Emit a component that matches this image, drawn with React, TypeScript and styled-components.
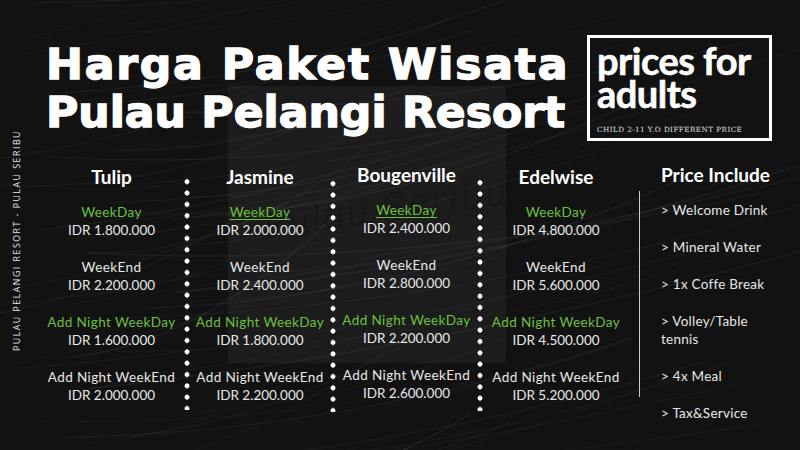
import React from 'react'
import styled, { createGlobalStyle } from 'styled-components'

const GlobalStyle = createGlobalStyle`
  html, body {
    margin: 0;
    padding: 0;
    background: #111;
  }
  * { box-sizing: border-box; }
`

const GREEN = '#6cc040'

type Tier = { label: string; price: string; green?: boolean; underline?: boolean }
type Package = { name: string; shift?: number; dotShift?: number; tiers: Tier[] }

const packages: Package[] = [
  {
    name: 'Tulip',
    dotShift: 0,
    tiers: [
      { label: 'WeekDay', price: 'IDR 1.800.000', green: true },
      { label: 'WeekEnd', price: 'IDR 2.200.000' },
      { label: 'Add Night WeekDay', price: 'IDR 1.600.000', green: true },
      { label: 'Add Night WeekEnd', price: 'IDR 2.000.000' },
    ],
  },
  {
    name: 'Jasmine',
    dotShift: 2,
    tiers: [
      { label: 'WeekDay', price: 'IDR 2.000.000', green: true, underline: true },
      { label: 'WeekEnd', price: 'IDR 2.400.000' },
      { label: 'Add Night WeekDay', price: 'IDR 1.800.000', green: true },
      { label: 'Add Night WeekEnd', price: 'IDR 2.200.000' },
    ],
  },
  {
    name: 'Bougenville',
    shift: -2,
    dotShift: 1,
    tiers: [
      { label: 'WeekDay', price: 'IDR 2.400.000', green: true, underline: true },
      { label: 'WeekEnd', price: 'IDR 2.800.000' },
      { label: 'Add Night WeekDay', price: 'IDR 2.200.000', green: true },
      { label: 'Add Night WeekEnd', price: 'IDR 2.600.000' },
    ],
  },
  {
    name: 'Edelwise',
    tiers: [
      { label: 'WeekDay', price: 'IDR 4.800.000', green: true },
      { label: 'WeekEnd', price: 'IDR 5.600.000' },
      { label: 'Add Night WeekDay', price: 'IDR 4.500.000', green: true },
      { label: 'Add Night WeekEnd', price: 'IDR 5.200.000' },
    ],
  },
]

const includes = ['Welcome Drink', 'Mineral Water', '1x Coffe Break', 'Volley/Table tennis', '4x Meal', 'Tax&Service']

const Page = styled.div`
  position: relative;
  width: 800px;
  height: 450px;
  overflow: hidden;
  background: #121212;
  display: flex;
  font-family: 'Lato', 'Noto Sans', sans-serif;
  color: #fff;
`

const Texture = styled.svg`
  position: absolute;
  inset: 0;
  pointer-events: none;
`

const Panel = styled.div`
  position: absolute;
  left: 228px;
  top: 86px;
  width: 278px;
  height: 277px;
  background: rgba(255, 255, 255, 0.045);
  display: flex;
  align-items: center;
  justify-content: center;
  pointer-events: none;
`

const Watermark = styled.span`
  font-family: 'DejaVu Serif', serif;
  font-style: italic;
  font-size: 38px;
  color: rgba(0, 0, 0, 0.16);
  transform: rotate(-8deg) translate(20px, -14px);
  white-space: nowrap;
`

const SideRail = styled.div`
  position: relative;
  width: 34px;
  flex: none;
  display: flex;
  align-items: flex-start;
  justify-content: center;
  padding-top: 130px;
`

const SideLabel = styled.div`
  writing-mode: vertical-rl;
  transform: rotate(180deg);
  font-family: 'Open Sans', sans-serif;
  font-size: 8.8px;
  letter-spacing: 1.5px;
  color: #ececec;
  white-space: nowrap;
`

const Main = styled.div`
  position: relative;
  flex: 1;
  display: flex;
  flex-direction: column;
`

const Header = styled.div`
  display: flex;
  align-items: flex-start;
  margin-top: 35px;
  height: 106px;
`

const Title = styled.h1`
  margin: 6px 0 0 12px;
  width: 541px;
  font-family: 'DejaVu Sans', sans-serif;
  font-weight: 700;
  font-size: 42px;
  line-height: 48px;
  -webkit-text-stroke: 1.4px #fff;
  transform: scaleX(1.05);
  transform-origin: left top;
  white-space: nowrap;
`

const TitleLine = styled.div<{ $track: number }>`
  letter-spacing: ${p => p.$track}px;
`

const AdultBox = styled.div`
  width: 185px;
  height: 106px;
  border: 3px solid #fff;
  padding: 6px 0 0 7px;
  display: flex;
  flex-direction: column;
`

const AdultText = styled.div`
  font-family: 'Lato', sans-serif;
  font-weight: 700;
  font-size: 38px;
  line-height: 33px;
  letter-spacing: -0.5px;
  -webkit-text-stroke: 0.6px #fff;
`

const ChildNote = styled.div`
  margin-top: 15px;
  font-family: 'DejaVu Serif', serif;
  font-size: 7.2px;
  line-height: 9px;
  letter-spacing: 0.45px;
  color: #e4e4e4;
`

const Body = styled.div`
  display: flex;
  margin-top: 26px;
  padding-left: 5px;
`

const Column = styled.div<{ $w: number; $shift?: number }>`
  width: ${p => p.$w}px;
  display: flex;
  flex-direction: column;
  align-items: center;
  margin-top: ${p => p.$shift || 0}px;
`

const ColTitle = styled.div`
  font-weight: 700;
  font-size: 19px;
  line-height: 20px;
  margin-bottom: 16px;
`

const TierGroup = styled.div`
  display: flex;
  flex-direction: column;
  align-items: center;
  margin-bottom: 19px;
`

const TierLabel = styled.div<{ $green?: boolean; $underline?: boolean }>`
  font-size: 13.5px;
  line-height: 18px;
  letter-spacing: 0.4px;
  white-space: nowrap;
  color: ${p => (p.$green ? GREEN : '#e8e8e8')};
  text-decoration: ${p => (p.$underline ? 'underline' : 'none')};
  text-underline-offset: 2px;
`

const TierPrice = styled.div`
  font-size: 13.5px;
  line-height: 18px;
  color: #e8e8e8;
  white-space: nowrap;
`

const Dots = styled.div<{ $shift?: number }>`
  width: 6px;
  height: 234px;
  margin-top: ${p => 9 + (p.$shift || 0)}px;
  background: radial-gradient(circle, #fff 2.2px, transparent 2.8px) 0 0 / 6px 11.35px repeat-y;
`

const Rule = styled.div`
  width: 1px;
  height: 206px;
  margin: 24px 0 0 10px;
  background: #cfcfcf;
`

const Includes = styled.div`
  margin-left: 21px;
  display: flex;
  flex-direction: column;
`

const IncludeTitle = styled.div`
  font-weight: 700;
  font-size: 19px;
  line-height: 20px;
  margin-top: -2px;
  margin-bottom: 16px;
`

const IncludeItem = styled.div`
  width: 112px;
  font-size: 13.5px;
  line-height: 18px;
  letter-spacing: 0.25px;
  color: #e8e8e8;
  margin-bottom: 19px;
`

const widths = [145, 140, 141, 146]

const strokes = Array.from({ length: 90 }, (_, i) => {
  const r = (n: number) => {
    const v = Math.sin(i * 12.9898 + n * 78.233) * 43758.5453
    return v - Math.floor(v)
  }
  const y0 = -40 + r(1) * 560
  const x0 = -60 + r(2) * 260
  const len = 250 + r(3) * 500
  const rise = 60 + r(4) * 90
  const bend = 20 + r(5) * 40
  return {
    d: `M${x0} ${y0} Q${x0 + len / 2} ${y0 - rise / 2 + bend} ${x0 + len} ${y0 - rise}`,
    o: 0.025 + r(6) * 0.05,
    w: 0.4 + r(7) * 0.8,
  }
})

export default function App() {
  return (
    <>
      <GlobalStyle />
      <Page>
        <Texture width="800" height="450" viewBox="0 0 800 450">
          {strokes.map((s, i) => (
            <path key={i} d={s.d} fill="none" stroke="#fff" strokeOpacity={s.o} strokeWidth={s.w} />
          ))}
        </Texture>
        <Panel>
          <Watermark>Pulau Seribu</Watermark>
        </Panel>
        <SideRail>
          <SideLabel>PULAU PELANGI RESORT - PULAU SERIBU</SideLabel>
        </SideRail>
        <Main>
          <Header>
            <Title>
              <TitleLine $track={1.7}>Harga Paket Wisata</TitleLine>
              <TitleLine $track={0}>Pulau Pelangi Resort</TitleLine>
            </Title>
            <AdultBox>
              <AdultText>prices for</AdultText>
              <AdultText>adults</AdultText>
              <ChildNote>CHILD 2-11 Y.O DIFFERENT PRICE</ChildNote>
            </AdultBox>
          </Header>
          <Body>
            {packages.map((pkg, idx) => (
              <React.Fragment key={pkg.name}>
                <Column $w={widths[idx]} $shift={pkg.shift}>
                  <ColTitle>{pkg.name}</ColTitle>
                  {pkg.tiers.map(t => (
                    <TierGroup key={t.label}>
                      <TierLabel $green={t.green} $underline={t.underline}>{t.label}</TierLabel>
                      <TierPrice>{t.price}</TierPrice>
                    </TierGroup>
                  ))}
                </Column>
                {idx < packages.length - 1 && <Dots $shift={pkg.dotShift} />}
              </React.Fragment>
            ))}
            <Rule />
            <Includes>
              <IncludeTitle>Price Include</IncludeTitle>
              {includes.map(item => (
                <IncludeItem key={item}>&gt; {item}</IncludeItem>
              ))}
            </Includes>
          </Body>
        </Main>
      </Page>
    </>
  )
}
